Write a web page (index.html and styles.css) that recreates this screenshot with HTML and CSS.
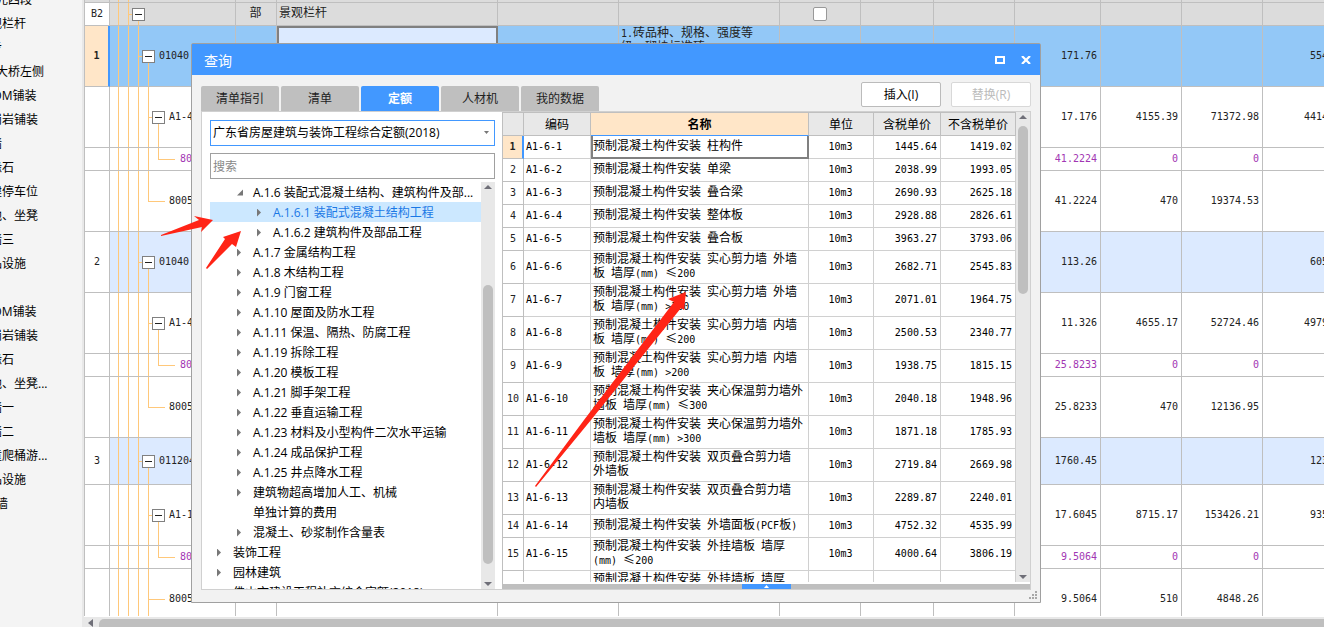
FILE: index.html
```
<!DOCTYPE html>
<html lang="zh-CN">
<head>
<meta charset="utf-8">
<title>查询</title>
<link rel="stylesheet" href="styles.css">
</head>
<body>
<div class="app">
  <nav class="sidebar">
    <ul>
      <li class="deep">单元四段</li>
      <li>景观栏杆</li>
      <li>跑步</li>
      <li class="deep">梁大桥左侧</li>
      <li>地 DM铺装</li>
      <li>花岗岩铺装</li>
      <li>景墙</li>
      <li>路缘石</li>
      <li>新建停车位</li>
      <li>树池、坐凳</li>
      <li>景墙三</li>
      <li>用品设施</li>
      <li></li>
      <li>地 DM铺装</li>
      <li>花岗岩铺装</li>
      <li>路缘石</li>
      <li>树池、坐凳...</li>
      <li>景墙一</li>
      <li>景墙二</li>
      <li>儿童爬桶游...</li>
      <li>用品设施</li>
      <li class="deep">围墙</li>
    </ul>
  </nav>
  <main class="workspace">
    <div class="sheet-wrap">
      <table class="sheet">
        <colgroup>
          <col class="w25"><col class="w126"><col class="w41"><col class="w221"><col class="w121"><col class="w161"><col class="w81"><col class="w73"><col class="w81"><col class="w86"><col class="w81"><col class="w81"><col class="w69">
        </colgroup>
        <tbody>
          <tr class="sliver part"><td></td><td class="rails"></td><td></td><td></td><td></td><td></td><td></td><td></td><td></td><td></td><td></td><td></td><td></td></tr>
          <tr class="low part"><td class="no">B2</td><td class="n0"><div class="node"><button class="box" aria-label="折叠"></button></div></td><td class="mid"><span class="cn">部</span></td><td><span class="cn">景观栏杆</span></td><td></td><td></td><td class="mid"><input class="check" type="checkbox" aria-label="锁定"></td><td></td><td></td><td></td><td></td><td></td><td></td></tr>
          <tr class="high current"><td class="no">1</td><td class="n1"><div class="node"><button class="box" aria-label="折叠"></button>01040</div></td><td></td><td class="editing"></td><td></td><td class="desc">1.<span class="cn">砖品种、规格、强度等<br>级</span>:M<span class="cn">砌块标准砖</span></td><td></td><td></td><td></td><td class="num">171.76</td><td></td><td></td><td class="num">554</td></tr>
          <tr class="high"><td class="no"></td><td class="n2"><div class="node"><button class="box" aria-label="折叠"></button>A1-4</div></td><td></td><td></td><td></td><td></td><td></td><td></td><td></td><td class="num">17.176</td><td class="num">4155.39</td><td class="num">71372.98</td><td class="num">4414</td></tr>
          <tr class="low res"><td class="no"></td><td class="n3"><div class="node">80</div></td><td></td><td></td><td></td><td></td><td></td><td></td><td></td><td class="num">41.2224</td><td class="num">0</td><td class="num">0</td><td></td></tr>
          <tr class="high"><td class="no"></td><td class="n4"><div class="node">8005</div></td><td></td><td></td><td></td><td></td><td></td><td></td><td></td><td class="num">41.2224</td><td class="num">470</td><td class="num">19374.53</td><td></td></tr>
          <tr class="high item"><td class="no">2</td><td class="n1"><div class="node"><button class="box" aria-label="折叠"></button>01040</div></td><td></td><td></td><td></td><td></td><td></td><td></td><td></td><td class="num">113.26</td><td></td><td></td><td class="num">605</td></tr>
          <tr class="high"><td class="no"></td><td class="n2"><div class="node"><button class="box" aria-label="折叠"></button>A1-4</div></td><td></td><td></td><td></td><td></td><td></td><td></td><td></td><td class="num">11.326</td><td class="num">4655.17</td><td class="num">52724.46</td><td class="num">4979</td></tr>
          <tr class="low res"><td class="no"></td><td class="n3"><div class="node">80</div></td><td></td><td></td><td></td><td></td><td></td><td></td><td></td><td class="num">25.8233</td><td class="num">0</td><td class="num">0</td><td></td></tr>
          <tr class="high"><td class="no"></td><td class="n4"><div class="node">8005</div></td><td></td><td></td><td></td><td></td><td></td><td></td><td></td><td class="num">25.8233</td><td class="num">470</td><td class="num">12136.95</td><td></td></tr>
          <tr class="medium item"><td class="no">3</td><td class="n1"><div class="node"><button class="box" aria-label="折叠"></button>011204</div></td><td></td><td></td><td></td><td></td><td></td><td></td><td></td><td class="num">1760.45</td><td></td><td></td><td class="num">123</td></tr>
          <tr class="high"><td class="no"></td><td class="n2"><div class="node"><button class="box" aria-label="折叠"></button>A1-1</div></td><td></td><td></td><td></td><td></td><td></td><td></td><td></td><td class="num">17.6045</td><td class="num">8715.17</td><td class="num">153426.21</td><td class="num">935</td></tr>
          <tr class="low res"><td class="no"></td><td class="n3"><div class="node">80</div></td><td></td><td></td><td></td><td></td><td></td><td></td><td></td><td class="num">9.5064</td><td class="num">0</td><td class="num">0</td><td></td></tr>
          <tr class="high"><td class="no"></td><td class="n4 more"><div class="node">8005</div></td><td class="mid"><span class="cn">商</span></td><td><span class="cn">预拌水泥砂浆抹灰砌筑材料</span></td><td><span class="cn">湿拌砂浆</span></td><td></td><td></td><td></td><td></td><td class="num">9.5064</td><td class="num">510</td><td class="num">4848.26</td><td></td></tr>
        </tbody>
      </table>
    </div>
    <div class="hscroll">
      <svg width="6" height="8" viewBox="0 0 6 8"><path d="M5 0v8L0 4z" fill="#6f6f78"/></svg>
      <div class="hthumb"></div>
    </div>
  </main>

  <section class="dialog" role="dialog" aria-label="查询">
    <header class="titlebar">
      <h1>查询</h1>
      <button aria-label="最大化"><svg width="10" height="8" viewBox="0 0 10 8"><path d="M1 1h8v6H1z" fill="none" stroke="#fff" stroke-width="2"/></svg></button>
      <button aria-label="关闭"><svg width="10" height="8" viewBox="0 0 10 8"><path d="M1 0l8 8M9 0L1 8" stroke="#fff" stroke-width="2.2"/></svg></button>
    </header>
    <div class="toolbar">
      <div class="tabs" role="tablist">
        <button role="tab">清单指引</button>
        <button role="tab">清单</button>
        <button role="tab" class="on" aria-selected="true">定额</button>
        <button role="tab">人材机</button>
        <button role="tab">我的数据</button>
      </div>
      <div class="actions">
        <button>插入(I)</button>
        <button disabled>替换(R)</button>
      </div>
    </div>
    <div class="panel">
      <div class="left">
        <div class="combo">
          <select aria-label="定额库"><option>广东省房屋建筑与装饰工程综合定额(2018)</option></select>
          <svg width="5" height="4" viewBox="0 0 5 4"><path d="M0 0h5L2.500 3z" fill="#777"/></svg>
        </div>
        <input class="search" type="text" placeholder="搜索" aria-label="搜索">
        <div class="tree-wrap">
          <ul class="tree">
            <li class="l2 open">A.1.6 装配式混凝土结构、建筑构件及部...</li>
            <li class="l3 leafy chosen">A.1.6.1 装配式混凝土结构工程</li>
            <li class="l3 leafy">A.1.6.2 建筑构件及部品工程</li>
            <li class="l2 leafy">A.1.7 金属结构工程</li>
            <li class="l2 leafy">A.1.8 木结构工程</li>
            <li class="l2 leafy">A.1.9 门窗工程</li>
            <li class="l2 leafy">A.1.10 屋面及防水工程</li>
            <li class="l2 leafy">A.1.11 保温、隔热、防腐工程</li>
            <li class="l2 leafy">A.1.19 拆除工程</li>
            <li class="l2 leafy">A.1.20 模板工程</li>
            <li class="l2 leafy">A.1.21 脚手架工程</li>
            <li class="l2 leafy">A.1.22 垂直运输工程</li>
            <li class="l2 leafy">A.1.23 材料及小型构件二次水平运输</li>
            <li class="l2 leafy">A.1.24 成品保护工程</li>
            <li class="l2 leafy">A.1.25 井点降水工程</li>
            <li class="l2 leafy">建筑物超高增加人工、机械</li>
            <li class="l2">单独计算的费用</li>
            <li class="l2 leafy">混凝土、砂浆制作含量表</li>
            <li class="l1 leafy">装饰工程</li>
            <li class="l1 leafy">园林建筑</li>
            <li class="l1">佛山市建设工程补充综合定额(2018)</li>
          </ul>
          <div class="vscroll">
            <svg width="8" height="4" viewBox="0 0 8 4"><path d="M0 4h8L4 0z" fill="#6f6f78"/></svg>
            <div class="track"><div class="before"></div><div class="thumb"></div></div>
            <svg width="8" height="4" viewBox="0 0 8 4"><path d="M0 0h8L4 4z" fill="#6f6f78"/></svg>
          </div>
        </div>
      </div>
      <div class="right">
        <div class="result-row">
          <div class="result-wrap">
            <table class="result">
              <colgroup><col class="c21"><col class="c67"><col class="c218"><col class="c65"><col class="c67"><col class="c75"></colgroup>
              <thead>
                <tr><th></th><th>编码</th><th class="active">名称</th><th>单位</th><th>含税单价</th><th>不含税单价</th></tr>
              </thead>
              <tbody>
                <tr class="picked"><td class="no">1</td><td>A1-6-1</td><td class="name"><span class="cn">预制混凝土构件安装</span> <span class="cn">柱构件</span></td><td class="mid">10m3</td><td class="num">1445.64</td><td class="num">1419.02</td></tr>
                <tr><td class="no">2</td><td>A1-6-2</td><td><span class="cn">预制混凝土构件安装</span> <span class="cn">单梁</span></td><td class="mid">10m3</td><td class="num">2038.99</td><td class="num">1993.05</td></tr>
                <tr><td class="no">3</td><td>A1-6-3</td><td><span class="cn">预制混凝土构件安装</span> <span class="cn">叠合梁</span></td><td class="mid">10m3</td><td class="num">2690.93</td><td class="num">2625.18</td></tr>
                <tr><td class="no">4</td><td>A1-6-4</td><td><span class="cn">预制混凝土构件安装</span> <span class="cn">整体板</span></td><td class="mid">10m3</td><td class="num">2928.88</td><td class="num">2826.61</td></tr>
                <tr><td class="no">5</td><td>A1-6-5</td><td><span class="cn">预制混凝土构件安装</span> <span class="cn">叠合板</span></td><td class="mid">10m3</td><td class="num">3963.27</td><td class="num">3793.06</td></tr>
                <tr class="two"><td class="no">6</td><td>A1-6-6</td><td><span class="cn">预制混凝土构件安装</span> <span class="cn">实心剪力墙</span> <span class="cn">外墙<br>板</span> <span class="cn">墙厚</span>(mm) <span class="cn">≤</span>200</td><td class="mid">10m3</td><td class="num">2682.71</td><td class="num">2545.83</td></tr>
                <tr class="two"><td class="no">7</td><td>A1-6-7</td><td><span class="cn">预制混凝土构件安装</span> <span class="cn">实心剪力墙</span> <span class="cn">外墙<br>板</span> <span class="cn">墙厚</span>(mm) &gt;200</td><td class="mid">10m3</td><td class="num">2071.01</td><td class="num">1964.75</td></tr>
                <tr class="two"><td class="no">8</td><td>A1-6-8</td><td><span class="cn">预制混凝土构件安装</span> <span class="cn">实心剪力墙</span> <span class="cn">内墙<br>板</span> <span class="cn">墙厚</span>(mm) <span class="cn">≤</span>200</td><td class="mid">10m3</td><td class="num">2500.53</td><td class="num">2340.77</td></tr>
                <tr class="two"><td class="no">9</td><td>A1-6-9</td><td><span class="cn">预制混凝土构件安装</span> <span class="cn">实心剪力墙</span> <span class="cn">内墙<br>板</span> <span class="cn">墙厚</span>(mm) &gt;200</td><td class="mid">10m3</td><td class="num">1938.75</td><td class="num">1815.15</td></tr>
                <tr class="two"><td class="no">10</td><td>A1-6-10</td><td><span class="cn">预制混凝土构件安装</span> <span class="cn">夹心保温剪力墙外<br>墙板</span> <span class="cn">墙厚</span>(mm) <span class="cn">≤</span>300</td><td class="mid">10m3</td><td class="num">2040.18</td><td class="num">1948.96</td></tr>
                <tr class="two"><td class="no">11</td><td>A1-6-11</td><td><span class="cn">预制混凝土构件安装</span> <span class="cn">夹心保温剪力墙外<br>墙板</span> <span class="cn">墙厚</span>(mm) &gt;300</td><td class="mid">10m3</td><td class="num">1871.18</td><td class="num">1785.93</td></tr>
                <tr class="two"><td class="no">12</td><td>A1-6-12</td><td><span class="cn">预制混凝土构件安装</span> <span class="cn">双页叠合剪力墙<br>外墙板</span></td><td class="mid">10m3</td><td class="num">2719.84</td><td class="num">2669.98</td></tr>
                <tr class="two"><td class="no">13</td><td>A1-6-13</td><td><span class="cn">预制混凝土构件安装</span> <span class="cn">双页叠合剪力墙<br>内墙板</span></td><td class="mid">10m3</td><td class="num">2289.87</td><td class="num">2240.01</td></tr>
                <tr><td class="no">14</td><td>A1-6-14</td><td><span class="cn">预制混凝土构件安装</span> <span class="cn">外墙面板</span>(PCF<span class="cn">板</span>)</td><td class="mid">10m3</td><td class="num">4752.32</td><td class="num">4535.99</td></tr>
                <tr class="two"><td class="no">15</td><td>A1-6-15</td><td><span class="cn">预制混凝土构件安装</span> <span class="cn">外挂墙板</span> <span class="cn">墙厚</span><br>(mm) <span class="cn">≤</span>200</td><td class="mid">10m3</td><td class="num">4000.64</td><td class="num">3806.19</td></tr>
                <tr class="two"><td class="no"></td><td></td><td><span class="cn">预制混凝土构件安装</span> <span class="cn">外挂墙板</span> <span class="cn">墙厚</span><br>(mm) &gt;200</td><td></td><td></td><td></td></tr>
              </tbody>
            </table>
          </div>
          <div class="vscroll">
            <svg width="8" height="4" viewBox="0 0 8 4"><path d="M0 4h8L4 0z" fill="#6f6f78"/></svg>
            <div class="track"><div class="thumb short"></div></div>
            <svg width="8" height="4" viewBox="0 0 8 4"><path d="M0 0h8L4 4z" fill="#6f6f78"/></svg>
          </div>
        </div>
        <div class="splitter"><button aria-label="展开"><svg width="5" height="3" viewBox="0 0 5 3"><path d="M0 3h5L2.500 0z" fill="#fff"/></svg></button></div>
      </div>
    </div>
    <svg class="grip" width="8" height="8" viewBox="0 0 8 8" fill="#a8a8a8"><path d="M6 0h2v2H6zM3 3h2v2H3zM6 3h2v2H6zM0 6h2v2H0zM3 6h2v2H3zM6 6h2v2H6z"/></svg>
  </section>

  <svg class="marks" width="700" height="500" viewBox="0 0 700 500" fill="#ff2416">
    <path d="M161 235L199 220L194 216L213 220L201 232L202 227L161 236Z"/>
    <path d="M206 268L225 239L223 237L241 231L236 247L232 244L207 269Z"/>
    <path d="M535 486L584 420L674 302L668 299L686 292L684 310L681 308L591 420L536 487Z"/>
  </svg>
</div>
</body>
</html>
```
FILE: styles.css
```
* { box-sizing: border-box; }
html, body { height: 100%; }
body {
  margin: 0;
  font: 12px/20px "Open Sans", "Noto Sans CJK SC", sans-serif;
  color: #000;
  background: #fff;
}
button, input, select { font: inherit; color: inherit; margin: 0; padding: 0; }
ul { list-style: none; margin: 0; padding: 0; }
svg { display: block; flex: none; }

.app {
  --line: #bfbfbf;
  --blue: #4298ff;
  --peach: #ffe6c8;
  --bar: #bfbfbf;
  position: relative;
  display: flex;
  height: 100%;
  overflow: hidden;
}

/* project list */
.sidebar {
  flex: none;
  width: 84px;
  background: #f4f4f4;
  border-right: 2px solid #e8e8e8;
  overflow: hidden;
}
.sidebar ul { margin-top: -12px; margin-left: -22px; }
.sidebar li { height: 24px; line-height: 24px; white-space: nowrap; }
.sidebar .deep { padding-left: 6px; }

/* bill sheet */
.workspace { flex: 1; min-width: 0; display: flex; flex-direction: column; }
.sheet-wrap {
  flex: 1;
  min-height: 0;
  overflow: hidden;
  border-left: 1px solid var(--line);
}
table { table-layout: fixed; border-collapse: separate; border-spacing: 0; }
td {
  font: 10px/14px "DejaVu Sans Mono", "Noto Sans CJK SC", monospace;
  overflow: hidden;
  white-space: nowrap;
}
.cn { font-family: "Noto Sans CJK SC", sans-serif; font-size: 12px; line-height: 10px; }
.sheet { width: max(100%, 1247px); color: #222; }
.sheet td {
  padding: 0 3px 0 2px;
  border-right: 1px solid var(--line);
  border-bottom: 1px solid var(--line);
}
.w25 { width: 25px; } .w126 { width: 126px; } .w41 { width: 41px; }
.w221 { width: 221px; } .w121 { width: 121px; } .w161 { width: 161px; }
.w81 { width: 81px; } .w73 { width: 73px; } .w86 { width: 86px; } .w69 { width: 69px; }
.sliver td { height: 3px; }
.low td { height: 23px; }
.medium td { height: 47px; }
.high td { height: 61px; }
.part td { background-color: #dcdcdc; }
.item td { background-color: #dceaff; }
.current td { background-color: #93c8f7; }
.res td { color: #a236b3; }
.sheet .no { text-align: center; padding: 0; background-color: #fff; }
.sheet .current .no { background-color: var(--peach); border-right: 2px solid var(--blue); font-weight: bold; }
.mid { text-align: center; }
.num { text-align: right; }
.sheet .editing { background: #dceaff; border: 2px solid #808080; }
.sheet .desc { vertical-align: top; padding-top: 1px; }

/* outline rails */
.rails, .n0, .n1, .n2, .n3, .n4 {
  --o: linear-gradient(#ffc87a, #ffc87a);
  background-repeat: no-repeat;
  background-image: var(--o), var(--o), var(--o), var(--o), var(--o), var(--o);
}
.rails { background-position: 8px 0, 18px 0; background-size: 1px 100%, 1px 100%, 0, 0, 0, 0; }
.n0 {
  background-position: 8px 0, 18px 0, 18px 50%, 28px 100%, 0 0, 0 0;
  background-size: 1px 100%, 1px 100%, 5px 1px, 1px 50%, 0, 0;
}
.n1 {
  background-position: 8px 0, 18px 0, 28px 0, 28px 50%, 38px 100%, 0 0;
  background-size: 1px 100%, 1px 100%, 1px 100%, 5px 1px, 1px 50%, 0;
}
.n2 {
  background-position: 8px 0, 18px 0, 28px 0, 38px 0, 38px 50%, 48px 100%;
  background-size: 1px 100%, 1px 100%, 1px 100%, 1px 100%, 5px 1px, 1px 50%;
}
.n3 {
  background-position: 8px 0, 18px 0, 28px 0, 38px 0, 48px 50%, 48px 0;
  background-size: 1px 100%, 1px 100%, 1px 100%, 1px 100%, 17px 1px, 1px 50%;
}
.n4 {
  background-position: 8px 0, 18px 0, 28px 0, 38px 0, 38px 50%, 0 0;
  background-size: 1px 100%, 1px 100%, 1px 100%, 1px 50%, 17px 1px, 0;
}
.more { background-size: 1px 100%, 1px 100%, 1px 100%, 1px 100%, 17px 1px, 0; }
.node { display: flex; align-items: center; gap: 4px; }
.n0 .node { padding-left: 20px; }
.n1 .node { padding-left: 30px; }
.n2 .node { padding-left: 40px; }
.n3 .node { padding-left: 68px; }
.n4 .node { padding-left: 57px; }
.box {
  flex: none;
  width: 13px;
  height: 13px;
  border: 1px solid #808080;
  background: linear-gradient(#222, #222) center / 7px 1px no-repeat #fff;
}
.check {
  appearance: none;
  display: block;
  width: 14px;
  height: 14px;
  margin: 0 auto;
  border: 1px solid #999;
  border-radius: 2px;
  background: #fff;
}

.hscroll {
  flex: none;
  height: 11px;
  display: flex;
  align-items: flex-end;
  gap: 5px;
  padding-left: 4px;
  background: #e8e8e8;
  border-top: 1px solid #fff;
}
.hthumb { flex: 1; height: 8px; background: var(--bar); border-top-left-radius: 5px; }

/* query window */
.dialog {
  position: absolute;
  left: 191px;
  top: 43px;
  width: 850px;
  height: 560px;
  display: flex;
  flex-direction: column;
  background: #f2f2f2;
  border: 1px solid #a0a0a0;
  border-radius: 2px 2px 0 0;
}
.titlebar {
  flex: none;
  display: flex;
  align-items: center;
  gap: 16px;
  height: 31px;
  padding: 0 9px 0 12px;
  background: var(--blue);
  color: #fff;
}
.titlebar h1 { flex: 1; margin: 0; padding-top: 2px; font-size: 14px; font-weight: normal; }
.titlebar button { border: 0; background: none; }
.toolbar {
  flex: none;
  display: flex;
  justify-content: space-between;
  align-items: flex-end;
  height: 36px;
  padding: 0 9px;
}
.tabs { display: flex; gap: 2px; }
.tabs button {
  width: 78px;
  height: 25px;
  border: 0;
  border-radius: 2px 2px 0 0;
  background: var(--bar);
  color: #222;
}
.tabs .on { background: var(--blue); color: #fff; font-weight: bold; }
.actions { display: flex; gap: 10px; padding-bottom: 4px; }
.actions button {
  width: 80px;
  height: 25px;
  border: 1px solid #bbb;
  border-radius: 2px;
  background: #fff;
}
.actions button:disabled { border-color: #d8d8d8; color: #bbb; }
.panel {
  flex: 1;
  min-height: 0;
  display: flex;
  margin: 0 9px 12px;
  border: 1px solid #d0d0d0;
  background: #fff;
}
.left {
  flex: none;
  width: 300px;
  display: flex;
  flex-direction: column;
  padding: 8px 7px 0 8px;
}
.combo {
  flex: none;
  display: flex;
  align-items: center;
  height: 26px;
  padding-right: 5px;
  border: 1px solid var(--blue);
}
.combo select { appearance: none; flex: 1; min-width: 0; height: 24px; padding: 0 2px; border: 0; background: none; }
.search {
  flex: none;
  width: 100%;
  height: 26px;
  margin: 7px 0 3px;
  padding: 0 2px;
  border: 1px solid #a0a0a0;
}
.search::placeholder { color: #888; opacity: 1; }
.tree-wrap { flex: 1; min-height: 0; display: flex; }
.tree { flex: 1; min-width: 0; overflow: hidden; }
.tree li { display: flex; align-items: center; height: 20px; padding-top: 1px; line-height: 19px; white-space: nowrap; }
.tree li::before { content: ""; flex: none; width: 16px; height: 8px; }
.tree .leafy::before { clip-path: polygon(0 0, 4px 4px, 0 8px); background-color: #777; }
.tree .open::before { clip-path: polygon(6px 1px, 6px 7px, 0 7px); background-color: #777; }
.l1 { padding-left: 7px; }
.l2 { padding-left: 27px; }
.l3 { padding-left: 47px; }
.tree .chosen { background: #cce8ff; color: #1a78e6; }

.vscroll {
  flex: none;
  width: 14px;
  display: flex;
  flex-direction: column;
  align-items: center;
  justify-content: space-between;
  padding: 3px 0;
  background: #e8e8e8;
}
.track { flex: 1; width: 10px; display: flex; flex-direction: column; padding: 7px 0 18px; }
.before { flex: 89; }
.thumb { flex: 277; background: var(--bar); border-radius: 5px; }
.short { flex: none; height: 39%; }

.right { flex: 1; min-width: 0; display: flex; flex-direction: column; border-left: 1px solid var(--line); }
.result-row { flex: 1; min-height: 0; display: flex; padding-bottom: 2px; }
.result-wrap { flex: 1; min-width: 0; overflow: hidden; border-top: 1px solid var(--line); }
.result { width: 100%; }
.c21 { width: 21px; } .c67 { width: 67px; } .c218 { width: 218px; } .c65 { width: 65px; } .c75 { width: 75px; }
.result th, .result td { border-right: 1px solid #d0d0d0; border-bottom: 1px solid #d0d0d0; }
.result th {
  height: 23px;
  padding: 0;
  font: 12px/14px "Noto Sans CJK SC", sans-serif;
  background: #e8e8e8;
  border-color: var(--line);
  white-space: nowrap;
}
.result .active { background: var(--peach); border-bottom-color: var(--blue); font-weight: bold; }
.result td { height: 23px; padding: 0 3px 0 2px; }
.result .two td { height: 33px; }
.result .no { padding: 0; text-align: center; color: #222; border-color: var(--line); }
.result .picked .no { background: var(--peach); border-right: 2px solid var(--blue); font-weight: bold; }
.result .picked .name { padding-left: 0; border: 2px solid #808080; border-top: 0; }
.splitter { flex: none; display: flex; justify-content: center; height: 5px; background: var(--bar); }
.splitter button {
  display: flex;
  align-items: center;
  justify-content: center;
  width: 49px;
  height: 5px;
  border: 0;
  background: var(--blue);
}
.grip { position: absolute; right: 3px; bottom: 3px; }

/* hand-drawn pointers lie over both windows */
.marks { position: absolute; left: 0; top: 0; pointer-events: none; }
```
